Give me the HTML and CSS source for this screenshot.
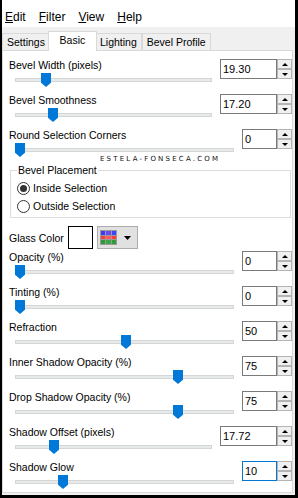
FILE: index.html
```html
<!DOCTYPE html>
<html>
<head>
<meta charset="utf-8">
<link rel="stylesheet" href="styles.css">
</head>
<body>
<div class="window">
  <div class="menubar">
    <span class="menu"><u>E</u>dit</span>
    <span class="menu"><u>F</u>ilter</span>
    <span class="menu"><u>V</u>iew</span>
    <span class="menu"><u>H</u>elp</span>
  </div>
  <div class="tabstrip">
    <div class="tab">Settings</div>
    <div class="tab active">Basic</div>
    <div class="tab">Lighting</div>
    <div class="tab">Bevel Profile</div>
  </div>
  <div class="panel">
    <div class="watermark">ESTELA-FONSECA.COM</div>

    <div class="row">
      <div class="label">Bevel Width (pixels)</div>
      <div class="slider"><div class="track"></div><div class="thumb" style="left:26px"></div></div>
      <div class="spin"><div class="box wide">19.30</div><div class="btns"><div class="btn up"></div><div class="btn down"></div></div></div>
    </div>

    <div class="row">
      <div class="label">Bevel Smoothness</div>
      <div class="slider"><div class="track"></div><div class="thumb" style="left:33px"></div></div>
      <div class="spin"><div class="box wide">17.20</div><div class="btns"><div class="btn up"></div><div class="btn down"></div></div></div>
    </div>

    <div class="row">
      <div class="label">Round Selection Corners</div>
      <div class="slider"><div class="track"></div><div class="thumb" style="left:0px"></div></div>
      <div class="spin"><div class="box">0</div><div class="btns"><div class="btn up"></div><div class="btn down"></div></div></div>
    </div>

    <fieldset class="group">
      <legend>Bevel Placement</legend>
      <div class="radio"><span class="circle checked"></span><span>Inside Selection</span></div>
      <div class="radio"><span class="circle"></span><span>Outside Selection</span></div>
    </fieldset>

    <div class="glass">
      <span class="glass-label">Glass Color</span>
      <span class="swatch"></span>
      <span class="colorbtn">
        <svg class="grid-icon" width="17" height="15" viewBox="0 0 17 15">
          <rect x="0" y="0" width="17" height="15" fill="#9a9a9a"/>
          <rect x="1" y="1" width="4" height="4" fill="#3a3aff"/>
          <rect x="6" y="1" width="5" height="4" fill="#6e46f0"/>
          <rect x="12" y="1" width="4" height="4" fill="#3a46ff"/>
          <rect x="1" y="6" width="4" height="3" fill="#ff3c3c"/>
          <rect x="6" y="6" width="5" height="3" fill="#ff5a5a"/>
          <rect x="12" y="6" width="4" height="3" fill="#ff3c3c"/>
          <rect x="1" y="10" width="4" height="4" fill="#2e9a3a"/>
          <rect x="6" y="10" width="5" height="4" fill="#38a844"/>
          <rect x="12" y="10" width="4" height="4" fill="#2e9a3a"/>
        </svg>
        <svg class="arrow" width="7" height="4" viewBox="0 0 7 4"><polygon points="0,0 7,0 3.5,4" fill="#000"/></svg>
      </span>
    </div>

    <div class="row">
      <div class="label">Opacity (%)</div>
      <div class="slider"><div class="track"></div><div class="thumb" style="left:0px"></div></div>
      <div class="spin"><div class="box">0</div><div class="btns"><div class="btn up"></div><div class="btn down"></div></div></div>
    </div>

    <div class="row">
      <div class="label">Tinting (%)</div>
      <div class="slider"><div class="track"></div><div class="thumb" style="left:0px"></div></div>
      <div class="spin"><div class="box">0</div><div class="btns"><div class="btn up"></div><div class="btn down"></div></div></div>
    </div>

    <div class="row">
      <div class="label">Refraction</div>
      <div class="slider"><div class="track"></div><div class="thumb" style="left:106px"></div></div>
      <div class="spin"><div class="box">50</div><div class="btns"><div class="btn up"></div><div class="btn down"></div></div></div>
    </div>

    <div class="row">
      <div class="label">Inner Shadow Opacity (%)</div>
      <div class="slider"><div class="track"></div><div class="thumb" style="left:158px"></div></div>
      <div class="spin"><div class="box">75</div><div class="btns"><div class="btn up"></div><div class="btn down"></div></div></div>
    </div>

    <div class="row">
      <div class="label">Drop Shadow Opacity (%)</div>
      <div class="slider"><div class="track"></div><div class="thumb" style="left:158px"></div></div>
      <div class="spin"><div class="box">75</div><div class="btns"><div class="btn up"></div><div class="btn down"></div></div></div>
    </div>

    <div class="row">
      <div class="label">Shadow Offset (pixels)</div>
      <div class="slider"><div class="track"></div><div class="thumb" style="left:34px"></div></div>
      <div class="spin"><div class="box wide">17.72</div><div class="btns"><div class="btn up"></div><div class="btn down"></div></div></div>
    </div>

    <div class="row">
      <div class="label">Shadow Glow</div>
      <div class="slider"><div class="track"></div><div class="thumb" style="left:43px"></div></div>
      <div class="spin"><div class="box focus">10</div><div class="btns"><div class="btn up"></div><div class="btn down"></div></div></div>
    </div>
  </div>
</div>
</body>
</html>
```

FILE: styles.css
```css
* {
  box-sizing: border-box;
}

html, body {
  margin: 0;
  padding: 0;
}

body {
  font-family: "Liberation Sans", Arial, sans-serif;
  font-size: 10.5px;
  color: #000;
  background: #f0f0f0;
}

.window {
  width: 298px;
  height: 498px;
  border-left: 2px solid #000;
  border-right: 3px solid #000;
  border-bottom: 3px solid #000;
  display: flex;
  flex-direction: column;
  background: #f0f0f0;
  overflow: hidden;
}

/* Menu bar */
.menubar {
  flex-shrink: 0;
  height: 27px;
  background: #fff;
  display: flex;
  gap: 13px;
  padding: 9px 0 0 3px;
  font-size: 12px;
  line-height: 16px;
}

.menu u {
  text-decoration: underline;
  text-underline-offset: 1px;
}

/* Tabs */
.tabstrip {
  flex-shrink: 0;
  height: 23px;
  display: flex;
  align-items: flex-end;
  background: #f0f0f0;
}

.tab {
  height: 17px;
  min-width: 45px;
  padding: 0 4px;
  border: 1px solid #d9d9d9;
  border-bottom: none;
  background: #f0f0f0;
  line-height: 16px;
  text-align: center;
  white-space: nowrap;
}

.tab.active {
  height: 20px;
  min-width: 49px;
  margin: 0 -2px -1px;
  background: #fff;
  position: relative;
  z-index: 2;
}

/* Panel */
.panel {
  flex: 1;
  min-height: 0;
  margin: 0 2px 2px 0;
  background: #fff;
  border: 1px solid #d9d9d9;
  padding: 7px 0 0 6px;
  position: relative;
}

.watermark {
  position: absolute;
  left: 97px;
  top: 104px;
  font-family: "DejaVu Sans", sans-serif;
  font-size: 7px;
  line-height: 8px;
  letter-spacing: 2.2px;
  color: #111;
  white-space: nowrap;
}

/* Slider rows */
.row {
  display: grid;
  grid-template-columns: 1fr auto;
  grid-template-rows: 14px 16px;
  column-gap: 8px;
  height: 30px;
  margin-bottom: 5px;
}

.row:last-child {
  margin-bottom: 0;
}

.label {
  grid-column: 1;
  grid-row: 1;
  line-height: 14px;
  white-space: nowrap;
}

.slider {
  grid-column: 1;
  grid-row: 2;
  position: relative;
  margin-left: 6px;
}

.track {
  position: absolute;
  left: 0;
  right: 0;
  top: 6px;
  height: 4px;
  background: #e7eaea;
  border: 1px solid #d6d6d6;
}

.thumb {
  position: absolute;
  top: 1px;
  width: 10px;
  height: 14px;
  background: #0078d7;
  clip-path: polygon(0 0, 100% 0, 100% 70%, 50% 100%, 0 70%);
}

/* Spin boxes */
.spin {
  grid-column: 2;
  grid-row: 1 / 3;
  align-self: start;
  margin-top: 1px;
  display: flex;
}

.box {
  width: 35px;
  height: 20px;
  border: 1px solid #7a7a7a;
  background: #fff;
  padding-left: 2px;
  font-size: 11px;
  line-height: 18px;
}

.box.wide {
  width: 57px;
}

.box.focus {
  border-color: #0078d7;
}

.btns {
  display: flex;
  flex-direction: column;
  width: 15px;
  height: 20px;
}

.btn {
  height: 10px;
  border: 1px solid #b4b4b4;
  background: #f0f0f0;
  display: flex;
  align-items: center;
  justify-content: center;
}

.btn::after {
  content: "";
  width: 0;
  height: 0;
  border-left: 3px solid transparent;
  border-right: 3px solid transparent;
}

.btn.up::after {
  border-bottom: 3px solid #000;
}

.btn.down::after {
  border-top: 3px solid #000;
}

/* Group box */
.group {
  margin: 0 1px 0 1px;
  padding: 0 6px 4px 6px;
  border: 1px solid #dcdcdc;
  min-width: 0;
}

.group legend {
  padding: 0 1px;
  line-height: 14px;
}

.radio {
  display: flex;
  align-items: center;
  gap: 3px;
  height: 14px;
  line-height: 14px;
  margin-top: 4px;
}

.circle {
  width: 13px;
  height: 13px;
  border: 1px solid #333;
  border-radius: 50%;
  background: #fff;
  display: flex;
  align-items: center;
  justify-content: center;
}

.circle.checked::after {
  content: "";
  width: 7px;
  height: 7px;
  border-radius: 50%;
  background: #333;
}

/* Glass color */
.glass {
  display: flex;
  align-items: center;
  height: 23px;
  margin: 8px 0 1px;
}

.swatch {
  width: 25px;
  height: 23px;
  border: 1px solid #000;
  background: #fff;
  margin-left: 4px;
}

.colorbtn {
  width: 41px;
  height: 23px;
  margin-left: 4px;
  border: 1px solid #adadad;
  background: #e1e1e1;
  display: flex;
  align-items: center;
  padding-left: 2px;
}

.grid-icon {
  display: block;
}

.arrow {
  display: block;
  margin-left: 7px;
}
```
